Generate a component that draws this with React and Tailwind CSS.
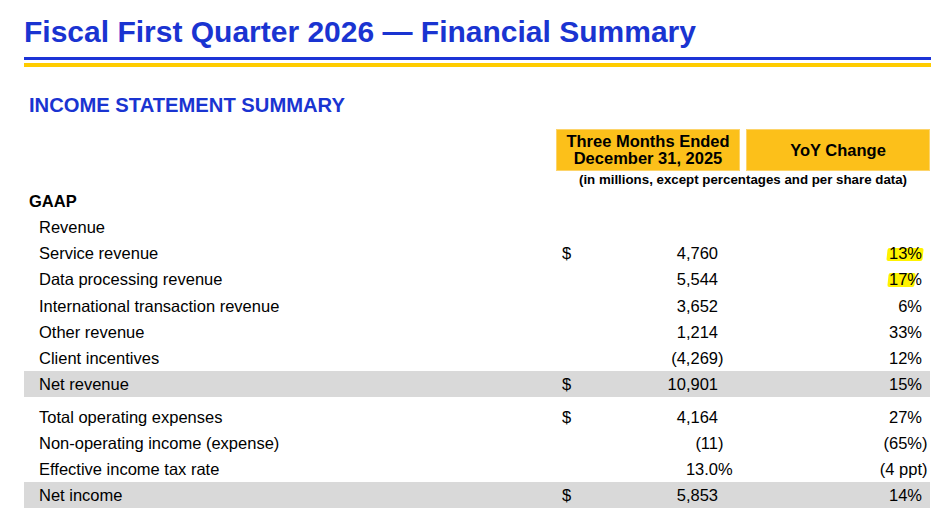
import React from "react";

const revenueRows = [
  { label: "Revenue" },
  { label: "Service revenue", dollar: true, value: "4,760", yoy: "13%", marker: "full" },
  { label: "Data processing revenue", value: "5,544", yoy: "17%", marker: "part" },
  { label: "International transaction revenue", value: "3,652", yoy: "6%" },
  { label: "Other revenue", value: "1,214", yoy: "33%" },
  { label: "Client incentives", value: "(4,269", valueTail: ")", yoy: "12%" },
  { label: "Net revenue", dollar: true, value: "10,901", yoy: "15%", shaded: true },
];

const incomeRows = [
  { label: "Total operating expenses", dollar: true, value: "4,164", yoy: "27%" },
  { label: "Non-operating income (expense)", value: "(11", valueTail: ")", yoy: "(65%", yoyTail: ")" },
  { label: "Effective income tax rate", value: "13.0", valueTail: "%", yoy: "(4 ppt", yoyTail: ")" },
  { label: "Net income", dollar: true, value: "5,853", yoy: "14%", shaded: true },
];

function Row({ row, tall }) {
  return (
    <div
      className={`flex items-center leading-[26px] ${tall ? "h-[26.2px]" : "h-[26px]"} ${
        row.shaded ? "bg-[#d9d9d9]" : ""
      }`}
    >
      <div className="w-[532px] pl-[15px]">{row.label}</div>
      <div className="flex w-[184px] justify-between pl-[6px] pr-[22px]">
        <span>{row.dollar ? "$" : ""}</span>
        <span>
          {row.value}
          {row.valueTail && <span className="inline-block w-0">{row.valueTail}</span>}
        </span>
      </div>
      <div className="w-[6px]" />
      <div className="w-[184px] pr-[8px] text-right">
        {row.yoy && (
          <span className="relative isolate inline-block">
            {row.marker === "full" && (
              <span className="absolute left-[-2px] right-[-1px] top-[8px] bottom-[5px] -z-10 -skew-x-6 rounded-[2px] bg-[#fff200]" />
            )}
            {row.marker === "part" && (
              <span className="absolute left-[-1px] right-[7px] top-[7px] bottom-[5px] -z-10 -skew-x-6 rounded-[2px] bg-[#fff200]" />
            )}
            {row.yoy}
          </span>
        )}
        {row.yoyTail && <span className="inline-block w-0 text-left">{row.yoyTail}</span>}
      </div>
    </div>
  );
}

export default function App() {
  return (
    <div className="min-h-screen bg-white pl-[24px] pr-[7px] pt-[14px] font-['Liberation_Sans',Arial,sans-serif] text-black">
      <h1 className="text-[30px] font-bold leading-[36px] text-[#1a34d1]">
        Fiscal First Quarter 2026 — Financial Summary
      </h1>
      <div className="mt-[7px] h-[3px] bg-[#1c34d6]" />
      <div className="mt-[3px] h-[4px] bg-[#ffcc00]" />

      <h2 className="mt-[26px] pl-[5px] text-[20.2px] font-bold leading-[24px] text-[#1a34d1]">
        INCOME STATEMENT SUMMARY
      </h2>

      <div className="mr-[1px] mt-[12px] text-[16.5px]">
        <div className="flex">
          <div className="w-[532px]" />
          <div className="flex h-[42px] w-[184px] flex-col items-center justify-center border border-[#fdd46a] bg-[#fcc01a] text-center font-bold leading-[17px]">
            <span>Three Months Ended</span>
            <span>December 31, 2025</span>
          </div>
          <div className="w-[6px]" />
          <div className="flex h-[42px] w-[184px] items-center justify-center border border-[#fdd46a] bg-[#fcc01a] font-bold">
            YoY Change
          </div>
        </div>
        <div className="flex h-[17px]">
          <div className="w-[532px]" />
          <div className="w-[374px] pt-[1px] text-center text-[13.3px] font-bold leading-[16px]">
            (in millions, except percentages and per share data)
          </div>
        </div>

        <div className="flex h-[26px] items-center pl-[5px] font-bold">GAAP</div>
        {revenueRows.map((row) => (
          <Row key={row.label} row={row} tall />
        ))}
        <div className="mt-[7px]">
          {incomeRows.map((row) => (
            <Row key={row.label} row={row} />
          ))}
        </div>
      </div>
    </div>
  );
}
